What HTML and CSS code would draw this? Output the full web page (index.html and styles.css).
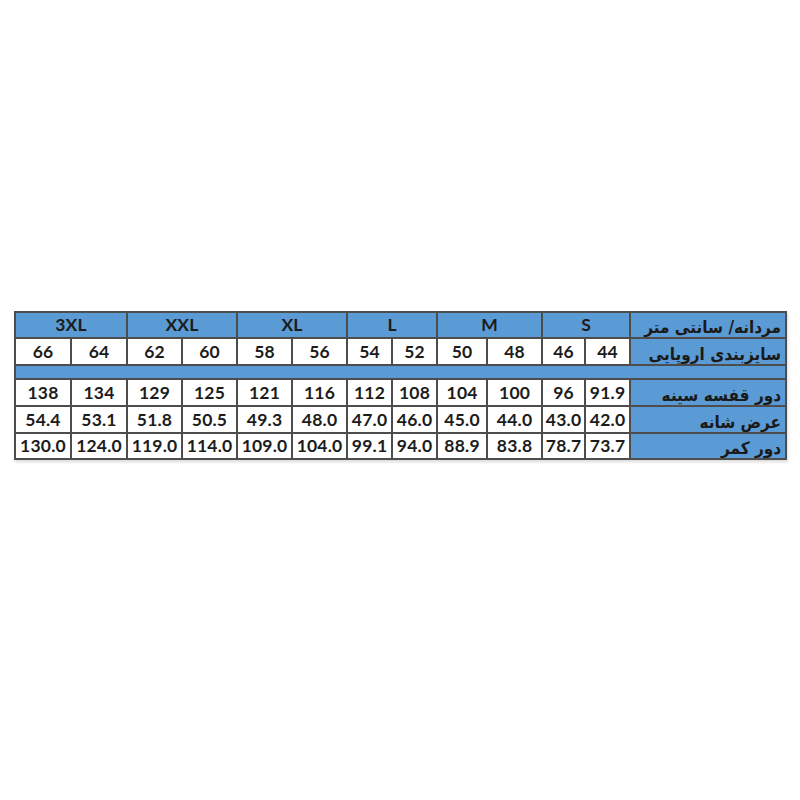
FILE: index.html
```html
<!DOCTYPE html>
<html lang="fa">
<head>
<meta charset="utf-8">
<link rel="stylesheet" href="styles.css">
</head>
<body>
<div class="page">
  <table class="chart">
    <colgroup>
      <col class="c56"><col class="c56"><col class="c55"><col class="c55"><col class="c55"><col class="c55"><col class="c45"><col class="c45"><col class="c50"><col class="c55"><col class="c43"><col class="c45"><col class="clabel">
    </colgroup>
    <tr class="r-head blue">
      <td colspan="2">3XL</td>
      <td colspan="2">XXL</td>
      <td colspan="2">XL</td>
      <td colspan="2">L</td>
      <td colspan="2">M</td>
      <td colspan="2">S</td>
      <td class="label" dir="rtl">مردانه/ سانتی متر</td>
    </tr>
    <tr class="r-size">
      <td>66</td><td>64</td><td>62</td><td>60</td><td>58</td><td>56</td><td>54</td><td>52</td><td>50</td><td>48</td><td>46</td><td>44</td>
      <td class="label" dir="rtl">سایزبندی اروپایی</td>
    </tr>
    <tr class="r-sep blue">
      <td colspan="13"></td>
    </tr>
    <tr class="r-data">
      <td>138</td><td>134</td><td>129</td><td>125</td><td>121</td><td>116</td><td>112</td><td>108</td><td>104</td><td>100</td><td>96</td><td>91.9</td>
      <td class="label" dir="rtl">دور قفسه سینه</td>
    </tr>
    <tr class="r-data">
      <td>54.4</td><td>53.1</td><td>51.8</td><td>50.5</td><td>49.3</td><td>48.0</td><td>47.0</td><td>46.0</td><td>45.0</td><td>44.0</td><td>43.0</td><td>42.0</td>
      <td class="label" dir="rtl">عرض شانه</td>
    </tr>
    <tr class="r-data">
      <td>130.0</td><td>124.0</td><td>119.0</td><td>114.0</td><td>109.0</td><td>104.0</td><td>99.1</td><td>94.0</td><td>88.9</td><td>83.8</td><td>78.7</td><td>73.7</td>
      <td class="label" dir="rtl">دور کمر</td>
    </tr>
  </table>
</div>
</body>
</html>
```

FILE: styles.css
```css
html, body {
  margin: 0;
  padding: 0;
  background: #ffffff;
}

.page {
  width: 800px;
  height: 800px;
  padding: 311px 0 0 14px;
  box-sizing: border-box;
}

.chart {
  border-collapse: collapse;
  table-layout: fixed;
  width: 773px;
  font-family: Lato, "DejaVu Sans", sans-serif;
  font-weight: 700;
  font-size: 17.5px;
  color: #1c1c1c;
  box-shadow: 1px 2px 3px rgba(0, 0, 0, 0.15);
}

.chart td {
  border: 2px solid #4d4d4d;
  text-align: center;
  padding: 0;
  line-height: 1;
  background: #ffffff;
  overflow: hidden;
  white-space: nowrap;
  letter-spacing: 0.2px;
}

.chart .blue td,
.chart td.label {
  background: #5b9bd5;
}

.chart td.label {
  text-align: right;
  padding: 0 4px 0 0;
  vertical-align: bottom;
  line-height: 20px;
  font-family: "DejaVu Sans Condensed", "DejaVu Sans", sans-serif;
  font-size: 17px;
  font-weight: 700;
  letter-spacing: 0;
  color: #1a1a1a;
}

.c56 { width: 56px; }
.c55 { width: 55px; }
.c50 { width: 50px; }
.c45 { width: 45px; }
.c43 { width: 43px; }
.clabel { width: 156px; }

.r-head td { height: 24px; }
.r-size td { height: 25px; }
.r-sep td { height: 12px; }
.r-data td { height: 25px; }
.r-data:last-child td { height: 24px; }
```
